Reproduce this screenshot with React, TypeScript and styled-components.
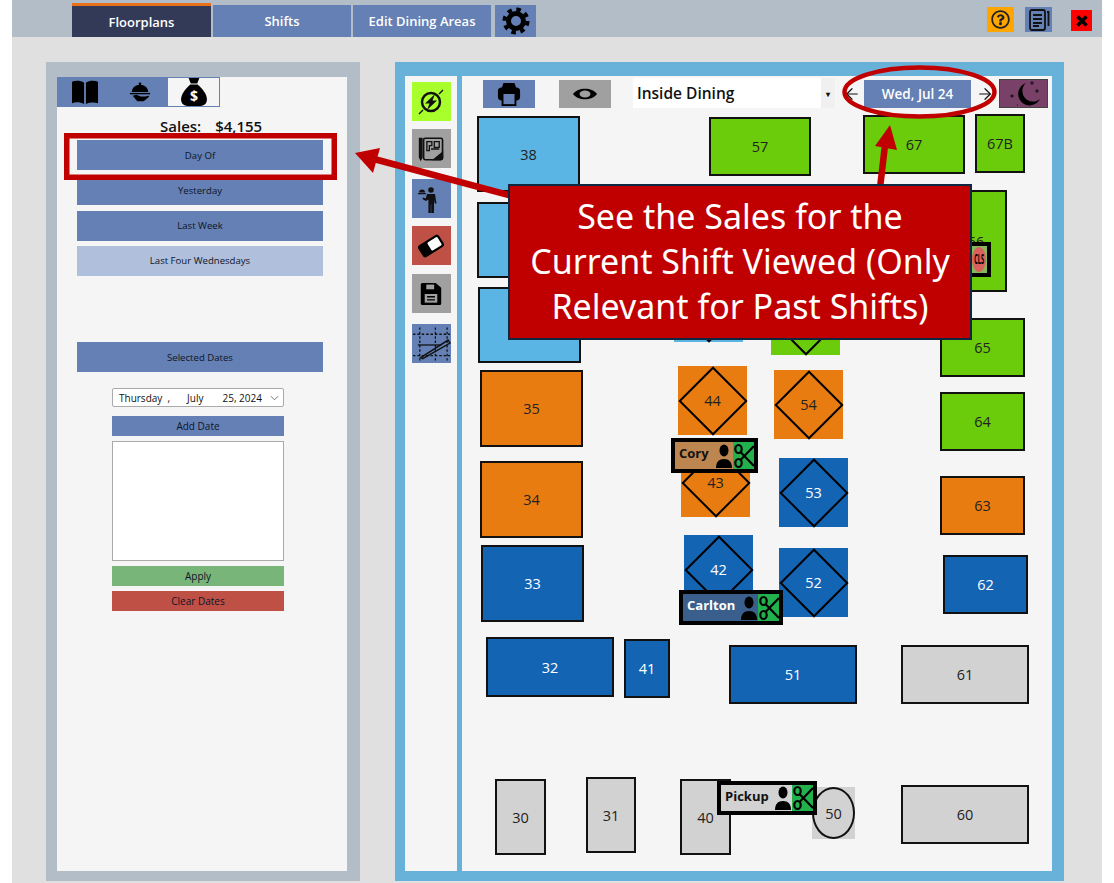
import styled, { createGlobalStyle } from "styled-components";
import { ArrowLeft, ArrowRight } from "lucide-react";
import { FaRegQuestionCircle } from "react-icons/fa";

const GlobalStyle = createGlobalStyle`
  html, body {
    margin: 0;
    padding: 0;
    background: #fff;
    font-family: "Open Sans", "Noto Sans", sans-serif;
  }
  * { box-sizing: border-box; }
`;

type Tone = "lightblue" | "orange" | "navy" | "green" | "gray";

const tones: Record<Tone, { bg: string; fg: string }> = {
  lightblue: { bg: "#5ab4e4", fg: "#222" },
  orange: { bg: "#e97c10", fg: "#222" },
  navy: { bg: "#1464b4", fg: "#fff" },
  green: { bg: "#6bcc0c", fg: "#222" },
  gray: { bg: "#d2d2d2", fg: "#222" },
};

interface TableData {
  label: string;
  x: number;
  y: number;
  w: number;
  h: number;
  tone: Tone;
  shape?: "rect" | "diamond" | "ellipse";
}

// floor coordinates are relative to the white canvas at 462,76
// tables with no label have their number hidden behind the callout
const tables: TableData[] = [
  { label: "38", x: 15, y: 40, w: 103, h: 76, tone: "lightblue" },
  { label: "", x: 15, y: 126, w: 103, h: 76, tone: "lightblue" },
  { label: "", x: 16, y: 211, w: 103, h: 76, tone: "lightblue" },
  { label: "35", x: 18, y: 294, w: 103, h: 77, tone: "orange" },
  { label: "34", x: 18, y: 385, w: 103, h: 77, tone: "orange" },
  { label: "33", x: 19, y: 469, w: 103, h: 77, tone: "navy" },
  { label: "32", x: 24, y: 561, w: 128, h: 60, tone: "navy" },
  { label: "41", x: 162, y: 563, w: 46, h: 59, tone: "navy" },
  { label: "51", x: 267, y: 569, w: 128, h: 59, tone: "navy" },
  { label: "61", x: 439, y: 569, w: 128, h: 59, tone: "gray" },
  { label: "62", x: 481, y: 479, w: 85, h: 59, tone: "navy" },
  { label: "63", x: 478, y: 400, w: 85, h: 59, tone: "orange" },
  { label: "64", x: 478, y: 316, w: 85, h: 59, tone: "green" },
  { label: "65", x: 478, y: 242, w: 85, h: 59, tone: "green" },
  { label: "66", x: 483, y: 114, w: 62, h: 102, tone: "green" },
  { label: "57", x: 247, y: 41, w: 102, h: 59, tone: "green" },
  { label: "67", x: 401, y: 39, w: 102, h: 59, tone: "green" },
  { label: "67B", x: 513, y: 38, w: 50, h: 59, tone: "green" },
  { label: "", x: 212, y: 197, w: 69, h: 69, tone: "lightblue", shape: "diamond" },
  { label: "", x: 309, y: 210, w: 69, h: 69, tone: "green", shape: "diamond" },
  { label: "44", x: 216, y: 290, w: 69, h: 69, tone: "orange", shape: "diamond" },
  { label: "54", x: 312, y: 294, w: 69, h: 69, tone: "orange", shape: "diamond" },
  { label: "43", x: 219, y: 372, w: 69, h: 69, tone: "orange", shape: "diamond" },
  { label: "53", x: 317, y: 382, w: 69, h: 69, tone: "navy", shape: "diamond" },
  { label: "42", x: 222, y: 459, w: 69, h: 69, tone: "navy", shape: "diamond" },
  { label: "52", x: 317, y: 472, w: 69, h: 69, tone: "navy", shape: "diamond" },
  { label: "30", x: 33, y: 703, w: 51, h: 76, tone: "gray" },
  { label: "31", x: 124, y: 701, w: 50, h: 76, tone: "gray" },
  { label: "40", x: 218, y: 703, w: 51, h: 76, tone: "gray" },
  { label: "50", x: 350, y: 711, w: 43, h: 52, tone: "gray", shape: "ellipse" },
  { label: "60", x: 439, y: 709, w: 128, h: 59, tone: "gray" },
];

const tags = [
  { name: "Cory", x: 209, y: 362, w: 87, h: 35, bg: "#bd8650", fg: "#111" },
  { name: "Carlton", x: 217, y: 514, w: 104, h: 35, bg: "#3b5f8c", fg: "#fff" },
  { name: "Pickup", x: 255, y: 705, w: 100, h: 34, bg: "#d2d2d2", fg: "#111" },
];

const railGaps = [0, 8, 11, 8, 9, 11];

function MapIcon() {
  return (
    <svg width="28" height="28" viewBox="0 0 34 34" fill="none" stroke="#111" strokeWidth="1.6">
      <path d="M3 4h3v23l-1.500 3L3 27z" fill="#111" />
      <rect x="8" y="4" width="23" height="26" rx="2" strokeWidth="2" />
      <path d="M12 8h6v5h-3v6h-3zM21 8h6v7h-6zM17 17h10" />
      <path d="M20 30l11-9v7a2 2 0 0 1-2 2z" fill="#111" />
    </svg>
  );
}

function BoltIcon() {
  return (
    <svg width="34" height="34" viewBox="0 0 34 34" fill="none">
      <circle cx="17" cy="17" r="9" stroke="#111" strokeWidth="2.500" />
      <path d="M21 9L11 18.500h4.500L13 25l10-9.500h-4.500z" fill="#111" />
      <path d="M5 29l4-4M25 9l4-4" stroke="#111" strokeWidth="1.400" />
    </svg>
  );
}

function WaiterIcon() {
  return (
    <svg width="30" height="30" viewBox="0 0 30 30" fill="#111">
      <circle cx="15" cy="6" r="2.800" />
      <path d="M11 10h8l1.500 9.500h-1.800l-.7-4V29h-2.800v-8.500h-.4V29H12.400V15.500l-2.500 1.500-3.500-2 .8-1.500 2.500 1z" />
      <path d="M2 9h8v1.200H2zM3 8.500a3 3 0 0 1 6 0z" />
    </svg>
  );
}

function PlanIcon() {
  return (
    <svg width="40" height="36" viewBox="0 0 40 36" fill="none" stroke="#111">
      <path d="M1 8h38M1 30h38M8 1v34M24 1v34M36 1v34" strokeDasharray="2.500 2" strokeWidth="1.300" />
      <path d="M6 19h24" strokeWidth="1.300" />
      <path d="M9 32L37 14l2 3-28 16z" strokeWidth="1.500" />
    </svg>
  );
}

function EraserIcon() {
  return (
    <svg width="28" height="28" viewBox="0 0 32 32">
      <g transform="rotate(-32 16 16)">
        <rect x="2" y="8" width="28" height="16" rx="3.500" fill="#000" />
        <rect x="14" y="10.500" width="13.500" height="11" rx="1.500" fill="#fff" />
      </g>
    </svg>
  );
}

function SaveIcon() {
  return (
    <svg width="22" height="24" viewBox="0 0 28 30">
      <path d="M3 1h17l7 6v20a2 2 0 0 1-2 2H3a2 2 0 0 1-2-2V3a2 2 0 0 1 2-2z" fill="#000" />
      <rect x="8" y="3" width="10" height="6" fill="#a0a0a0" />
      <rect x="6" y="15" width="16" height="11" fill="#a0a0a0" />
      <path d="M9 18.500h10M9 22.500h10" stroke="#000" strokeWidth="1.600" />
    </svg>
  );
}

function GearIcon() {
  return (
    <svg width="28" height="28" viewBox="0 0 28 28" fill="none" stroke="#000">
      <circle cx="14" cy="14" r="7.500" strokeWidth="5" />
      <circle cx="14" cy="14" r="11.500" strokeWidth="4" strokeDasharray="4.500 4.530" />
    </svg>
  );
}

function BookIcon() {
  return (
    <svg width="28" height="26" viewBox="0 0 30 28" fill="#000">
      <path d="M1 3c4-1.500 9-1.500 13 1v23c-4-2.500-9-2.500-13-1z" />
      <path d="M16 4c4-2.500 9-2.500 13-1v23c-4-1-9-1-13 1z" />
    </svg>
  );
}

function ClocheIcon() {
  return (
    <svg width="22" height="22" viewBox="0 0 24 24" fill="#000">
      <circle cx="12" cy="3" r="1.500" />
      <path d="M3 12a9 8 0 0 1 18 0z" />
      <rect x="1" y="13" width="22" height="1.500" />
      <path d="M4 16l4-1 5 2h5l3-1c1 0 1 1 0 2l-5 4H9z" />
    </svg>
  );
}

function MoneyBag() {
  return (
    <svg width="26" height="28" viewBox="0 0 24 26">
      <path d="M7 0h10l-2 5H9z" fill="#000" />
      <path d="M8.500 6h7C20 10 24 15 24 20c0 4-3 6-6 6H6c-3 0-6-2-6-6 0-5 4-10 8.500-14z" fill="#000" />
      <text x="12" y="21" fontSize="13" fontWeight="700" textAnchor="middle" fill="#fff" fontFamily="Open Sans">$</text>
    </svg>
  );
}

function PrinterIcon() {
  return (
    <svg width="24" height="24" viewBox="0 0 26 26">
      <path d="M7 1h12l2 6H5z" fill="#000" />
      <rect x="1" y="6" width="24" height="14" rx="4" fill="#000" />
      <rect x="6" y="12" width="14" height="13" fill="#6480b4" stroke="#000" strokeWidth="2" />
    </svg>
  );
}

function EyeIcon() {
  return (
    <svg width="26" height="16" viewBox="0 0 26 16">
      <path d="M1 8C6 1 20 1 25 8 20 15 6 15 1 8z" fill="#000" />
      <ellipse cx="13" cy="8" rx="5.500" ry="3.500" fill="#a0a0a0" />
    </svg>
  );
}

function NotesIcon() {
  return (
    <svg width="22" height="24" viewBox="0 0 22 24" fill="none" stroke="#111" strokeWidth="1.800">
      <rect x="2" y="2" width="15" height="20" rx="2" />
      <path d="M5 7h9M5 11h9M5 15h9M5 18h6" />
      <path d="M19 4h1.500v14" />
    </svg>
  );
}

function CloseIcon() {
  return (
    <svg width="12" height="12" viewBox="0 0 12 12" stroke="#000" strokeWidth="3.500">
      <path d="M1.500 1.500l9 9M10.500 1.500l-9 9" />
    </svg>
  );
}

function MoonIcon() {
  return (
    <svg width="44" height="27" viewBox="0 0 44 27" fill="none">
      <path d="M24 3A11.500 11.500 0 1 0 38 19A10.600 10.600 0 0 1 24 3z" fill="#000" />
      <path d="M8 16h4M10 14v4M28 3h4M30 1v4M33 11h4M35 9v4M15 25h1" stroke="#111" strokeWidth="1" />
    </svg>
  );
}

function PersonIcon() {
  return (
    <svg width="16" height="24" viewBox="0 0 16 24" fill="#000">
      <ellipse cx="8" cy="6.500" rx="4.500" ry="6" />
      <path d="M0 24c0-6 3-9 8-9s8 3 8 9z" />
    </svg>
  );
}

function ScissorsIcon() {
  return (
    <svg width="20" height="26" viewBox="0 0 20 26" fill="none" stroke="#000" strokeWidth="2.200">
      <ellipse cx="4.500" cy="6" rx="3.200" ry="4" />
      <ellipse cx="4.500" cy="20" rx="3.200" ry="4" />
      <path d="M6.500 9L20 23M6.500 17L20 3" />
    </svg>
  );
}

export default function App() {
  return (
    <>
      <GlobalStyle />
      <Root>
        <TopBar>
          <Tabs>
            <TopTab $active>Floorplans</TopTab>
            <TopTab>Shifts</TopTab>
            <TopTab>Edit Dining Areas</TopTab>
            <GearTab>
              <GearIcon />
            </GearTab>
          </Tabs>
          <TopActions>
            <HelpButton>
              <FaRegQuestionCircle size={19} color="#222" />
            </HelpButton>
            <NotesButton>
              <NotesIcon />
            </NotesButton>
            <CloseButton>
              <CloseIcon />
            </CloseButton>
          </TopActions>
        </TopBar>

        <Main>
          <SidePanel>
            <SideInner>
              <SideTabs>
                <SideTab>
                  <BookIcon />
                </SideTab>
                <SideTab>
                  <ClocheIcon />
                </SideTab>
                <SideTab $active>
                  <MoneyBag />
                </SideTab>
              </SideTabs>
              <SalesLine>
                <span>Sales:</span>
                <span>$4,155</span>
              </SalesLine>
              <RangeButton>Day Of</RangeButton>
              <RangeButton>Yesterday</RangeButton>
              <RangeButton>Last Week</RangeButton>
              <RangeButton $light>Last Four Wednesdays</RangeButton>
              <RangeButton $gapTop={61}>Selected Dates</RangeButton>
              <DateColumn>
                <DatePicker>
                  <span>Thursday&nbsp; ,</span>
                  <DatePart $gap={17}>July</DatePart>
                  <DatePart $gap={19}>25, 2024</DatePart>
                  <Chevron viewBox="0 0 10 6">
                    <path d="M1 1l4 4 4-4" fill="none" stroke="#666" />
                  </Chevron>
                </DatePicker>
                <SmallButton $bg="#6480b4">Add Date</SmallButton>
                <DateList />
                <SmallButton $bg="#77b578">Apply</SmallButton>
                <SmallButton $bg="#bf5045">Clear Dates</SmallButton>
              </DateColumn>
            </SideInner>
          </SidePanel>

          <FloorPanel>
            <ToolRail>
              <ToolButton $bg="#a8ff2c" $gap={railGaps[0]}><BoltIcon /></ToolButton>
              <ToolButton $bg="#a0a0a0" $gap={railGaps[1]}><MapIcon /></ToolButton>
              <ToolButton $bg="#6480b4" $gap={railGaps[2]}><WaiterIcon /></ToolButton>
              <ToolButton $bg="#bf5045" $gap={railGaps[3]}><EraserIcon /></ToolButton>
              <ToolButton $bg="#a0a0a0" $gap={railGaps[4]}><SaveIcon /></ToolButton>
              <ToolButton $bg="#6480b4" $gap={railGaps[5]}><PlanIcon /></ToolButton>
            </ToolRail>
            <Floor>
              <FloorBar>
                <BarButton $bg="#6480b4"><PrinterIcon /></BarButton>
                <BarButton $bg="#a0a0a0"><EyeIcon /></BarButton>
                <AreaSelect>
                  <span>Inside Dining</span>
                  <AreaCaret>▾</AreaCaret>
                </AreaSelect>
                <DateNav>
                  <NavArrow><ArrowLeft size={18} color="#111" strokeWidth={1.6} /></NavArrow>
                  <DateBadge>Wed, Jul 24</DateBadge>
                  <NavArrow $wide><ArrowRight size={18} color="#111" strokeWidth={1.6} /></NavArrow>
                </DateNav>
                <MoonButton><MoonIcon /></MoonButton>
              </FloorBar>
              {tables.map((t, i) => (
                <Table
                  key={i}
                  $tone={t.tone}
                  $shape={t.shape ?? "rect"}
                  style={{ left: t.x, top: t.y, width: t.w, height: t.h }}
                >
                  {t.shape === "diamond" && <Diamond />}
                  {t.shape === "ellipse" && <Oval />}
                  <TableLabel>{t.label}</TableLabel>
                </Table>
              ))}
              {tags.map((t) => (
                <ServerTag key={t.name} style={{ left: t.x, top: t.y, width: t.w, height: t.h, background: t.bg, color: t.fg }}>
                  <TagName>{t.name}</TagName>
                  <PersonIcon />
                  <ScissorBox>
                    <ScissorsIcon />
                  </ScissorBox>
                </ServerTag>
              ))}
              <MiniTag>
                <MiniBadge>
                  <MiniText>CLS</MiniText>
                </MiniBadge>
              </MiniTag>
            </Floor>
          </FloorPanel>
        </Main>

        <Annotations viewBox="0 0 1114 883" width="1114" height="883">
          <rect x="66.750" y="135.750" width="267.500" height="41.500" fill="none" stroke="#c00000" strokeWidth="5.500" />
          <ellipse cx="919.500" cy="92" rx="75" ry="24.500" fill="none" stroke="#c00000" strokeWidth="4.500" />
          <path d="M512 196L374 159" stroke="#c00000" strokeWidth="6.500" />
          <path d="M355 153L380 148L373 173z" fill="#c00000" />
          <path d="M880 188L885 145" stroke="#c00000" strokeWidth="6.500" />
          <path d="M890 125L875 146L897 150z" fill="#c00000" />
        </Annotations>
        <Callout>
          See the Sales for the
          <br />
          Current Shift Viewed (Only
          <br />
          Relevant for Past Shifts)
        </Callout>
      </Root>
    </>
  );
}

const Root = styled.div`
  position: relative;
  width: 1114px;
  height: 883px;
  overflow: hidden;
  background: #fff;
`;

const TopBar = styled.div`
  margin: 0 12px;
  height: 37px;
  background: #b3bdc8;
  display: flex;
  justify-content: space-between;
  padding-left: 60px;
`;

const Tabs = styled.div`
  display: flex;
  align-items: flex-end;
  gap: 2px;
`;

const TopTab = styled.div<{ $active?: boolean }>`
  width: 138px;
  height: ${(p) => (p.$active ? "34px" : "32px")};
  display: flex;
  align-items: center;
  justify-content: center;
  color: #fff;
  font-size: 13px;
  font-weight: 600;
  background: ${(p) => (p.$active ? "#323a58" : "#6480b4")};
  border-top: ${(p) => (p.$active ? "3px solid #e8701a" : "none")};
  &:first-child { width: 139px; }
`;

const GearTab = styled.div`
  width: 41px;
  height: 32px;
  margin-left: 2px;
  background: #6480b4;
  display: flex;
  align-items: center;
  justify-content: center;
`;

const TopActions = styled.div`
  display: flex;
  align-items: flex-start;
  padding-top: 7px;
  padding-right: 10px;
`;

const HelpButton = styled.div`
  width: 27px;
  height: 25px;
  background: #ffa500;
  display: flex;
  align-items: center;
  justify-content: center;
  margin-right: 11px;
`;

const NotesButton = styled.div`
  width: 27px;
  height: 25px;
  background: #6480b4;
  display: flex;
  align-items: center;
  justify-content: center;
  margin-right: 19px;
`;

const CloseButton = styled.div`
  width: 21px;
  height: 21px;
  margin-top: 3px;
  background: #ff0000;
  display: flex;
  align-items: center;
  justify-content: center;
`;

const Main = styled.div`
  margin: 0 12px;
  height: 846px;
  background: #e0e0e0;
  display: flex;
  gap: 35px;
  padding: 25px 38px 2px 34px;
`;

const SidePanel = styled.div`
  width: 314px;
  background: #b3bdc8;
  padding: 15px 13px 10px 11px;
`;

const SideInner = styled.div`
  height: 100%;
  background: #f5f5f5;
  display: flex;
  flex-direction: column;
  align-items: flex-start;
`;

const SideTabs = styled.div`
  align-self: stretch;
  height: 30px;
  display: flex;
`;

const SideTab = styled.div<{ $active?: boolean }>`
  width: ${(p) => (p.$active ? "53px" : "55px")};
  display: flex;
  align-items: center;
  justify-content: center;
  background: ${(p) => (p.$active ? "#f5f5f5" : "#6480b4")};
  border: ${(p) => (p.$active ? "1px solid #6480b4" : "none")};
`;

const SalesLine = styled.div`
  height: 33px;
  margin-left: 103px;
  padding-top: 9px;
  display: flex;
  gap: 14px;
  font-size: 15px;
  font-weight: 600;
  color: #111;
`;

const RangeButton = styled.div<{ $light?: boolean; $gapTop?: number }>`
  width: 246px;
  height: 30px;
  margin-left: 20px;
  margin-bottom: 5.330px;
  margin-top: ${(p) => p.$gapTop ?? 0}px;
  display: flex;
  align-items: center;
  justify-content: center;
  font-size: 9.600px;
  color: #0e1428;
  background: ${(p) => (p.$light ? "#b0c0dc" : "#6480b4")};
`;

const DateColumn = styled.div`
  width: 172px;
  margin-top: 10.500px;
  margin-left: 55px;
  display: flex;
  flex-direction: column;
  gap: 5px;
`;

const DatePicker = styled.div`
  height: 19px;
  margin-bottom: 4px;
  padding: 0 4px 0 6px;
  background: #fff;
  border: 1px solid #aaa;
  border-radius: 2px;
  display: flex;
  align-items: center;
  font-size: 10px;
  color: #111;
`;

const DatePart = styled.span<{ $gap: number }>`
  margin-left: ${(p) => p.$gap}px;
`;

const Chevron = styled.svg`
  width: 9px;
  height: 6px;
  margin-left: auto;
`;

const SmallButton = styled.div<{ $bg: string }>`
  height: 20px;
  background: ${(p) => p.$bg};
  color: #0e1428;
  font-size: 10px;
  display: flex;
  align-items: center;
  justify-content: center;
`;

const DateList = styled.div`
  height: 120px;
  background: #fff;
  border: 1px solid #aaa;
`;

const FloorPanel = styled.div`
  width: 669px;
  background: #68b2da;
  display: flex;
  gap: 5px;
  padding: 14px 12px 10px 10px;
`;

const ToolRail = styled.div`
  width: 52px;
  background: #f5f5f5;
  display: flex;
  flex-direction: column;
  align-items: center;
  padding-top: 6px;
`;

const ToolButton = styled.div<{ $bg: string; $gap: number }>`
  width: 39px;
  height: 39px;
  margin-top: ${(p) => p.$gap}px;
  background: ${(p) => p.$bg};
  display: flex;
  align-items: center;
  justify-content: center;
`;

const Floor = styled.div`
  position: relative;
  flex: 1;
  background: #f5f5f5;
`;

const FloorBar = styled.div`
  height: 38px;
  display: flex;
  align-items: flex-start;
  padding: 4px 0 0 21px;
`;

const BarButton = styled.div<{ $bg: string }>`
  width: 52px;
  height: 28px;
  margin-right: 24px;
  background: ${(p) => p.$bg};
  display: flex;
  align-items: center;
  justify-content: center;
`;

const AreaSelect = styled.div`
  width: 202px;
  height: 30px;
  margin: -2px 0 0 -2px;
  padding-left: 4px;
  background: #fff;
  display: flex;
  align-items: center;
  justify-content: space-between;
  font-size: 15.500px;
  font-weight: 600;
  color: #111;
`;

const AreaCaret = styled.span`
  width: 14px;
  height: 100%;
  background: #f0f0f0;
  font-size: 8px;
  display: flex;
  align-items: center;
  justify-content: center;
`;

const DateNav = styled.div`
  display: flex;
  align-items: center;
  height: 28px;
  margin-left: 4px;
`;

const NavArrow = styled.span<{ $wide?: boolean }>`
  width: ${(p) => (p.$wide ? "28px" : "25px")};
  display: flex;
  align-items: center;
  justify-content: center;
`;

const DateBadge = styled.div`
  width: 107px;
  height: 28px;
  background: #6480b4;
  color: #fff;
  font-size: 13.500px;
  font-weight: 600;
  display: flex;
  align-items: center;
  justify-content: center;
`;

const MoonButton = styled.div`
  width: 49px;
  height: 29px;
  margin-top: -1px;
  background: #7a4168;
  border: 1px solid #444;
  display: flex;
  align-items: center;
  justify-content: center;
`;

const Table = styled.div<{ $tone: Tone; $shape: string }>`
  position: absolute;
  display: flex;
  align-items: center;
  justify-content: center;
  background: ${(p) => tones[p.$tone].bg};
  color: ${(p) => tones[p.$tone].fg};
  border: ${(p) => (p.$shape === "rect" ? "2px solid #111" : "none")};
  font-size: 14.500px;
`;

const TableLabel = styled.span`
  position: relative;
`;

const Diamond = styled.div`
  position: absolute;
  left: 50%;
  top: 50%;
  width: 49px;
  height: 49px;
  transform: translate(-50%, -50%) rotate(45deg);
  border: 2px solid #000;
`;

const Oval = styled.div`
  position: absolute;
  inset: 0;
  border: 2px solid #111;
  border-radius: 50%;
`;

const ServerTag = styled.div`
  position: absolute;
  border: 4px solid #000;
  display: flex;
  align-items: center;
  padding-left: 4px;
  font-size: 13px;
  font-weight: 700;
`;

const TagName = styled.span`
  flex: 1;
  margin-top: -5px;
`;

const ScissorBox = styled.div`
  width: 21px;
  height: 100%;
  margin-left: 1px;
  background: #22b14c;
  display: flex;
  align-items: center;
  justify-content: center;
`;

const MiniTag = styled.div`
  position: absolute;
  left: 488px;
  top: 166px;
  width: 41px;
  height: 35px;
  padding-left: 18px;
  border: 4px solid #000;
  background: #85b85a;
`;

const MiniBadge = styled.div`
  width: 14px;
  height: 25px;
  margin-top: 1px;
  background: #d9605c;
  border-radius: 50%;
  display: flex;
  align-items: center;
  justify-content: center;
`;

const MiniText = styled.span`
  font-size: 7px;
  font-weight: 700;
  transform: scale(0.8, 1.900);
`;

const Annotations = styled.svg`
  position: absolute;
  left: 0;
  top: 0;
  pointer-events: none;
`;

const Callout = styled.div`
  position: absolute;
  left: 508px;
  top: 184px;
  width: 464px;
  height: 156px;
  padding-top: 8px;
  background: #c00000;
  border: 2px solid #0e2841;
  color: #fff;
  font-family: "Noto Sans", sans-serif;
  font-size: 34px;
  line-height: 45px;
  text-align: center;
`;
